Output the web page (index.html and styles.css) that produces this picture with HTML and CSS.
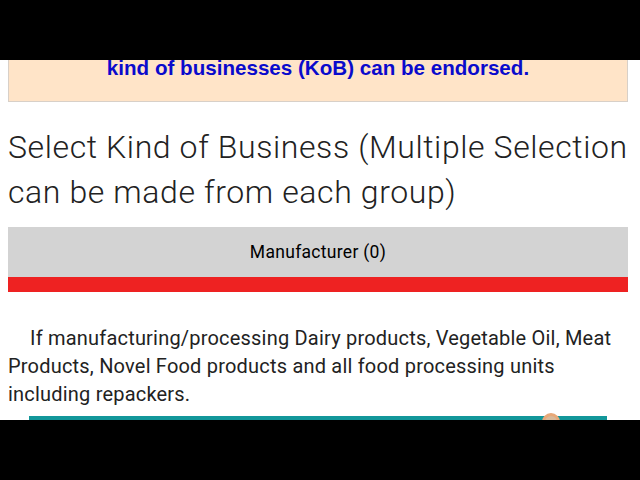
FILE: index.html
```html
<!DOCTYPE html>
<html lang="en">
<head>
<meta charset="utf-8">
<title>Select Kind of Business</title>
<link rel="stylesheet" href="styles.css">
</head>
<body>
<div class="frame">
  <div class="letterbox"></div>
  <div class="viewport">
    <div class="content">
      <div class="notice">kind of businesses (KoB) can be endorsed.</div>
      <h2 class="title">Select Kind of Business (Multiple Selection can be made from each group)</h2>
      <div class="group">
        <div class="group-head">Manufacturer (0)</div>
        <div class="group-bar"></div>
      </div>
      <p class="desc">If manufacturing/processing Dairy products, Vegetable Oil, Meat Products, Novel Food products and all food processing units including repackers.</p>
      <div class="option-bar"></div>
    </div>
    <span class="fab"></span>
  </div>
  <div class="letterbox"></div>
</div>
</body>
</html>
```

FILE: styles.css
```css
html, body {
  margin: 0;
  padding: 0;
  background: #000;
}

.frame {
  width: 640px;
  height: 480px;
  display: flex;
  flex-direction: column;
}

.letterbox {
  height: 60px;
  background: #000;
  flex: none;
}

.viewport {
  height: 360px;
  background: #fff;
  overflow: hidden;
  position: relative;
  flex: none;
}

.content {
  padding: 0 12px 0 8px;
}

.notice {
  margin-top: -5px;
  padding: 0 10px 21px;
  background: #ffe4c8;
  border: 1px solid #d8d0c8;
  color: #0a0acc;
  font-family: "Liberation Sans", Arial, sans-serif;
  font-weight: bold;
  font-size: 20.6px;
  line-height: 24px;
  text-align: center;
}

.title {
  margin: 23px 0 12px;
  font-family: Roboto, "Noto Sans", sans-serif;
  font-weight: 300;
  font-size: 32px;
  letter-spacing: 0.6px;
  line-height: 45px;
  color: #222;
}

.group-head {
  height: 50px;
  background: #d3d3d3;
  display: flex;
  align-items: center;
  justify-content: center;
  font-family: Roboto, "Noto Sans", sans-serif;
  font-weight: 400;
  font-size: 17.5px;
  letter-spacing: 0.3px;
  color: #000;
}

.group-bar {
  height: 15px;
  background: #ee2222;
}

.desc {
  margin: 32px 0 8px;
  text-indent: 22px;
  font-family: Roboto, "Noto Sans", sans-serif;
  font-size: 20px;
  letter-spacing: 0.2px;
  line-height: 28px;
  color: #222;
}

.option-bar {
  margin: 0 21px;
  height: 8px;
  background: #12979a;
}

.fab {
  position: absolute;
  left: 542px;
  top: 353px;
  width: 12px;
  height: 12px;
  border: 3px solid #e8a878;
  border-radius: 50%;
  background: #d8b898;
}
```
